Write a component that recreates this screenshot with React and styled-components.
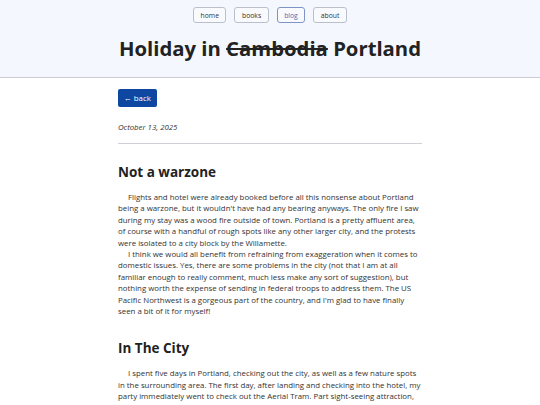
import React from 'react';
import styled, { createGlobalStyle } from 'styled-components';

const GlobalStyle = createGlobalStyle`
  html, body {
    margin: 0;
    padding: 0;
    background: #ffffff;
    font-family: 'Open Sans', 'Noto Sans', sans-serif;
    color: #2b2b2b;
  }
`;

const Header = styled.header`
  background: #f4f7fd;
  border-bottom: 1px solid #c9ccd3;
  height: 78px;
  box-sizing: border-box;
  padding-top: 7px;
  text-align: center;
`;

const Nav = styled.nav`
  display: flex;
  justify-content: center;
  gap: 8px;
`;

const NavButton = styled.a`
  display: flex;
  align-items: center;
  height: 16px;
  box-sizing: border-box;
  padding: 0 6.5px;
  border: 1px solid ${(p) => (p.$active ? '#7d95c6' : '#b9bfcb')};
  border-radius: 3px;
  background: #f9fafd;
  color: ${(p) => (p.$active ? '#4d6fb3' : '#333')};
  font-size: 6.8px;
  text-decoration: none;
`;

const Title = styled.h1`
  margin: 9.5px 0 0;
  font-size: 20.3px;
  font-weight: 700;
  line-height: 30px;
  color: #222;
  s {
    text-decoration-thickness: 1.5px;
  }
`;

const Main = styled.main`
  width: 304px;
  margin: 0 auto;
  padding-top: 11px;
`;

const BackButton = styled.a`
  display: flex;
  width: max-content;
  align-items: center;
  height: 18px;
  padding: 0 6px;
  border-radius: 2px;
  background: #0d47a1;
  color: #fff;
  font-size: 7.8px;
  text-decoration: none;
`;

const Date = styled.p`
  margin: 15px 0 0;
  font-size: 7.8px;
  font-style: italic;
  line-height: 11px;
  color: #333;
`;

const Rule = styled.hr`
  margin: 9.5px 0 0;
  border: none;
  border-top: 1px solid #cfd0da;
`;

const Heading = styled.h2`
  margin: 19px 0 11.5px;
  font-size: 13.5px;
  font-weight: 700;
  line-height: 18px;
  color: #222;
`;

const Para = styled.p`
  margin: 0;
  font-size: 7.85px;
  line-height: 11.4px;
  text-indent: 10px;
  color: #333;
`;

const Section = styled.section`
  & + & {
    margin-top: 21.5px;
  }
`;

export default function App() {
  return (
    <>
      <GlobalStyle />
      <Header>
        <Nav>
          <NavButton href="#">home</NavButton>
          <NavButton href="#">books</NavButton>
          <NavButton href="#" $active>blog</NavButton>
          <NavButton href="#">about</NavButton>
        </Nav>
        <Title>
          Holiday in <s>Cambodia</s> Portland
        </Title>
      </Header>
      <Main>
        <BackButton href="#">← back</BackButton>
        <Date>October 13, 2025</Date>
        <Rule />
        <Section>
          <Heading>Not a warzone</Heading>
          <Para>
            Flights and hotel were already booked before all this nonsense about Portland
            being a warzone, but it wouldn't have had any bearing anyways. The only fire I saw
            during my stay was a wood fire outside of town. Portland is a pretty affluent area,
            of course with a handful of rough spots like any other larger city, and the protests
            were isolated to a city block by the Willamette.
          </Para>
          <Para>
            I think we would all benefit from refraining from exaggeration when it comes to
            domestic issues. Yes, there are some problems in the city (not that I am at all
            familiar enough to really comment, much less make any sort of suggestion), but
            nothing worth the expense of sending in federal troops to address them. The US
            Pacific Northwest is a gorgeous part of the country, and I'm glad to have finally
            seen a bit of it for myself!
          </Para>
        </Section>
        <Section>
          <Heading>In The City</Heading>
          <Para>
            I spent five days in Portland, checking out the city, as well as a few nature spots
            in the surrounding area. The first day, after landing and checking into the hotel, my
            party immediately went to check out the Aerial Tram. Part sight-seeing attraction,
            part public transit, the tram connects the South Waterfront with the hospital campus
            up on Marquam Hill.
          </Para>
        </Section>
      </Main>
    </>
  );
}
